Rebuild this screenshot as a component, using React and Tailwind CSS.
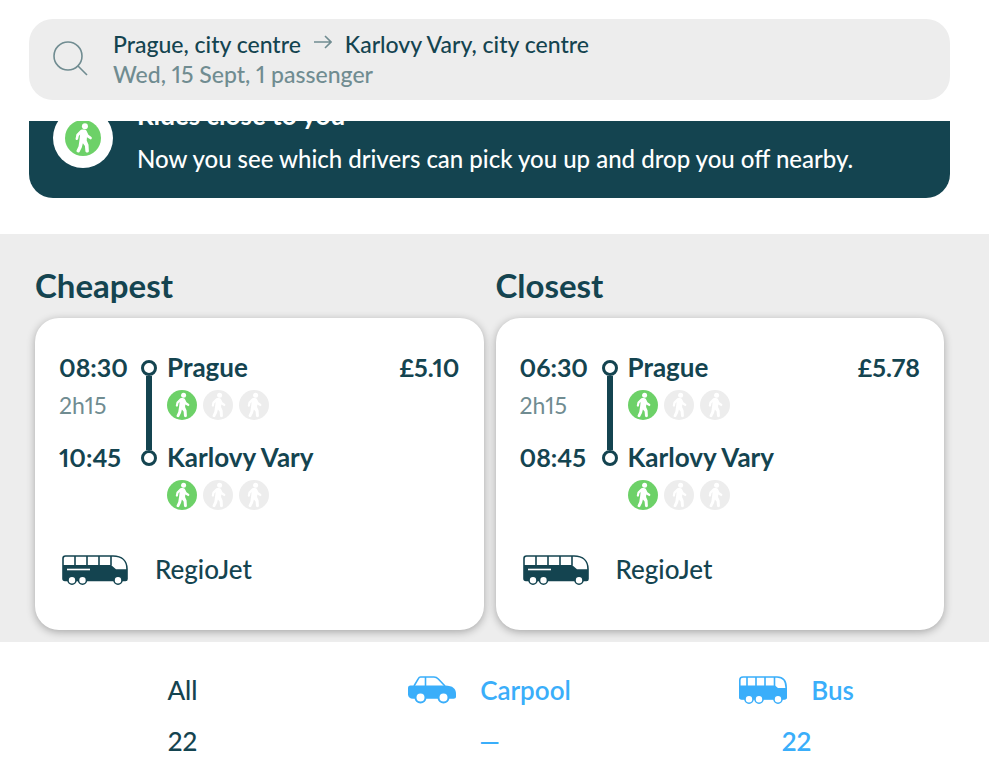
const rides = [
    { title: 'Cheapest', departure: '08:30', duration: '2h15', arrival: '10:45', price: '£5.10' },
    { title: 'Closest', departure: '06:30', duration: '2h15', arrival: '08:45', price: '£5.78' },
];

function SearchIcon() {
    return (
        <svg viewBox="0 0 36 36" className="w-9 h-9 shrink-0" fill="none" stroke="#708c91" strokeWidth="1.6" aria-hidden="true">
            <circle cx="15" cy="15" r="14" />
            <path d="M25 25L34 34" />
        </svg>
    );
}

function ArrowIcon() {
    return (
        <svg viewBox="0 0 18 14" className="w-[18px] h-3.5 mb-1" fill="none" stroke="#708c91" strokeWidth="1.6" aria-label="to">
            <path d="M0 7H17M11 1L17 7L11 13" />
        </svg>
    );
}

function WalkIcon({ className }) {
    return (
        <svg viewBox="0 0 30 30" className={className} aria-hidden="true">
            <circle cx="15" cy="15" r="15" fill="currentColor" />
            <circle cx="16.6" cy="5.2" r="2.5" fill="#fff" />
            <path
                fill="#fff"
                d="M13 8.4C14.4 7.7 17 7.9 17.9 8.9L19.5 12.2L22 14.1C23 15 22 16.5 21 16.1L18.3 14.4L18.1 17L19.6 20.6L19.9 26C19.8 27.5 17.2 27.5 17 26.1L16.6 21.6L14.9 19.4L14 22.9L12.1 26.7C11.3 27.7 9.2 26.8 9.6 25.5L11.3 21.8L12.1 16.5L12.6 12L11.5 13.3L10.9 16C10.5 17.1 8.7 16.8 8.8 15.6L9.5 11.9Z"
            />
        </svg>
    );
}

function CoachIcon() {
    return (
        <svg viewBox="0 0 66 30" className="w-[66px] h-[30px]" aria-hidden="true">
            <path
                d="M3.5 1H51C60 1 65 6 65 14V24C65 25 64.5 25.5 63.5 25.5H3C1.8 25.5 1 24.8 1 23.5V3.5C1 2 2 1 3.5 1Z"
                fill="#fff"
                stroke="#144450"
                strokeWidth="1.6"
            />
            <path d="M1 10H49L54 14.2H65V24C65 25 64.5 25.5 63.5 25.5H3C1.8 25.5 1 24.8 1 23.5Z" fill="#144450" />
            <path d="M13 1V10M25 1V10M37 1V10M49 1V10.5" stroke="#144450" strokeWidth="1.6" />
            <path d="M5 14.5H28" stroke="#fff" strokeWidth="1.6" />
            <g fill="#fff" stroke="#144450" strokeWidth="1.6">
                <circle cx="10" cy="25.2" r="4" />
                <circle cx="20.5" cy="25.2" r="4" />
                <circle cx="56" cy="25.2" r="4" />
            </g>
        </svg>
    );
}

function CarIcon() {
    return (
        <svg viewBox="0 0 48 28" className="w-12 h-7" aria-hidden="true">
            <path d="M6 10L10.5 2.4C11 1.4 11.7 1 12.5 1H26C28 1 29 1.6 30.3 3L37 10" fill="none" stroke="#3aaefa" strokeWidth="1.6" />
            <path d="M17.5 1V10" stroke="#3aaefa" strokeWidth="1.6" />
            <path d="M2.5 9.5H37C45 9.5 48 13 48 18V20.5C48 22 47 22.7 45.5 22.7H5C2 22.7 0 21 0 18.5V12C0 10.3 1 9.5 2.5 9.5Z" fill="#3aaefa" />
            <g fill="#fff" stroke="#3aaefa" strokeWidth="2">
                <circle cx="12.5" cy="21.5" r="5" />
                <circle cx="35.5" cy="21.5" r="5" />
            </g>
        </svg>
    );
}

function BusIcon() {
    return (
        <svg viewBox="0 0 48 28" className="w-12 h-7" aria-hidden="true">
            <path d="M4 1H38C44.5 1 47.2 5 47.2 12V21C47.2 22.3 46.5 23 45 23H3C1.5 23 0.8 22.3 0.8 21V4C0.8 2 2 1 4 1Z" fill="#fff" stroke="#3aaefa" strokeWidth="1.6" />
            <path d="M0 9.5H36L39 12H48V20.5C48 22.5 47 23.3 45 23.3H3C1 23.3 0 22.5 0 20.5Z" fill="#3aaefa" />
            <path d="M8 1V10M17 1V10M26 1V10M35.5 1V10" stroke="#3aaefa" strokeWidth="1.6" />
            <g fill="#fff" stroke="#3aaefa" strokeWidth="1.6">
                <circle cx="10" cy="23.2" r="4" />
                <circle cx="20" cy="23.2" r="4" />
                <circle cx="39" cy="23.2" r="4" />
            </g>
        </svg>
    );
}

function Stop({ name }) {
    return (
        <div>
            <div className="text-[26px] leading-[34px] font-bold">{name}</div>
            <div className="flex gap-1.5 mt-1.5">
                <WalkIcon className="w-[30px] h-[30px] text-[#6dd168]" />
                <WalkIcon className="w-[30px] h-[30px] text-[#ededed]" />
                <WalkIcon className="w-[30px] h-[30px] text-[#ededed]" />
            </div>
        </div>
    );
}

function RideCard({ ride }) {
    return (
        <section>
            <h2 className="text-[33px] leading-[38px] font-bold mb-3.5">{ride.title}</h2>
            <a href="#ride" className="block bg-white rounded-3xl px-6 pt-8 pb-10 shadow-[0_2px_8px_rgba(0,0,0,0.3)]">
                <div className="flex">
                    {/* Times */}
                    <div className="w-[78px] text-[25px] leading-[34px] font-bold">
                        <div>{ride.departure}</div>
                        <div className="text-[23px] leading-[34px] font-normal text-[#708c91] mt-1 mb-[18px]">{ride.duration}</div>
                        <div>{ride.arrival}</div>
                    </div>

                    {/* Track between the two stops */}
                    <div className="w-6 h-[116px] pt-2.5 flex flex-col items-center">
                        <span className="w-4 h-4 shrink-0 rounded-full border-3 border-[#144450]" />
                        <span className="w-1.5 grow bg-[#144450]" />
                        <span className="w-4 h-4 shrink-0 rounded-full border-3 border-[#144450]" />
                    </div>

                    <div className="flex flex-col gap-5 ml-1.5">
                        <Stop name="Prague" />
                        <Stop name="Karlovy Vary" />
                    </div>

                    <div className="ml-auto text-[25px] leading-[34px] font-bold">{ride.price}</div>
                </div>

                {/* Carrier */}
                <div className="flex items-center gap-[27px] h-10 mt-10 pl-[3px]">
                    <CoachIcon />
                    <span className="text-[26px] leading-[34px] pb-0.5 font-medium">RegioJet</span>
                </div>
            </a>
        </section>
    );
}

export default function App() {
    return (
        <div className="bg-white font-['Lato','Open_Sans',sans-serif] proportional-nums text-[#144450]">
            <header className="pl-[29px] pt-[19px] pr-[39px]">
                <button className="w-full flex items-center gap-6 text-left bg-[#ededed] rounded-3xl px-6 pt-2.5 pb-[11px] cursor-pointer">
                    <SearchIcon />
                    <span className="block text-[23px] leading-[30px] font-medium">
                        <span className="flex items-center gap-[13px]">
                            Prague, city centre
                            <ArrowIcon />
                            Karlovy Vary, city centre
                        </span>
                        <span className="block text-[#708c91]">Wed, 15 Sept, 1 passenger</span>
                    </span>
                </button>
            </header>

            <main>
                {/* Banner, scrolled partly under the search bar */}
                <div className="ml-[29px] mr-[39px] mt-[21px] h-[77px] overflow-hidden bg-[#144450] text-white rounded-b-3xl flex flex-col justify-end">
                    <div className="flex items-end gap-6 px-6 pb-[22px]">
                        <div className="w-[60px] h-[60px] mb-2 shrink-0 rounded-full bg-white flex items-center justify-center">
                            <WalkIcon className="w-9 h-9 text-[#6dd168]" />
                        </div>
                        <div>
                            <h3 className="text-[26px] leading-[34px] font-bold mb-2.5">Rides close to you</h3>
                            <p className="text-2xl leading-[34px] font-medium">Now you see which drivers can pick you up and drop you off nearby.</p>
                        </div>
                    </div>
                </div>

                <div className="mt-9 bg-[#ededed] pl-[35px] pr-[45px] pt-8 pb-3 grid grid-cols-2 gap-3 overflow-hidden">
                    {rides.map((ride) => (
                        <RideCard key={ride.title} ride={ride} />
                    ))}
                </div>
            </main>

            {/* Transport filter */}
            <nav className="pl-[29px] pr-[39px] grid grid-cols-3 text-[26px] leading-[34px] font-semibold text-[#3aaefa]">
                <button className="flex flex-col items-center gap-[17px] pt-[31px] pb-[11px] font-medium text-[#144450] cursor-pointer">
                    <span>All</span>
                    <span>22</span>
                </button>
                <button className="flex flex-col items-center gap-[17px] pt-[31px] pb-[11px] cursor-pointer">
                    <span className="flex items-center gap-6">
                        <CarIcon />
                        Carpool
                    </span>
                    <span>—</span>
                </button>
                <button className="flex flex-col items-center gap-[17px] pt-[31px] pb-[11px] cursor-pointer">
                    <span className="flex items-center gap-6">
                        <BusIcon />
                        Bus
                    </span>
                    <span>22</span>
                </button>
            </nav>
        </div>
    );
}
